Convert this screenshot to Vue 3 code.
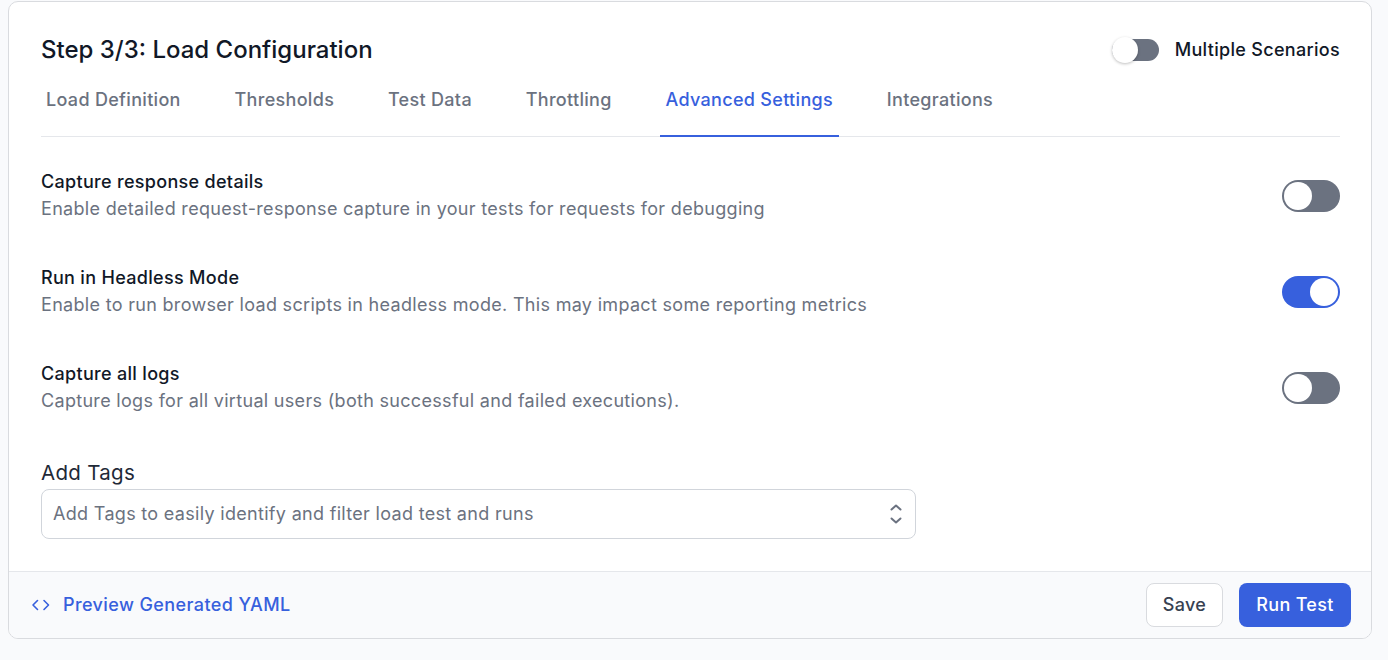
<template>
  <div class="page">
    <div class="card">
      <div class="body">
        <div class="head">
          <h1>Step 3/3: Load Configuration</h1>
          <div class="scenarios">
            <span class="mini-toggle"><span class="mini-knob"></span></span>
            <span class="scenarios-label">Multiple Scenarios</span>
          </div>
        </div>

        <div class="tabs">
          <div
            v-for="tab in tabs"
            :key="tab"
            class="tab"
            :class="{ active: tab === 'Advanced Settings' }"
          >
            {{ tab }}
          </div>
        </div>

        <div class="settings">
          <div v-for="item in settings" :key="item.title" class="setting">
            <div>
              <div class="setting-title">{{ item.title }}</div>
              <div class="setting-desc">{{ item.desc }}</div>
            </div>
            <span class="toggle" :class="{ on: item.on }"><span class="knob"></span></span>
          </div>
        </div>

        <div class="tags">
          <div class="tags-label">Add Tags</div>
          <div class="select">
            <span class="placeholder">Add Tags to easily identify and filter load test and runs</span>
            <svg width="16" height="26" viewBox="0 0 16 26" fill="none" stroke="#6b7280" stroke-width="2" stroke-linecap="round" stroke-linejoin="round">
              <path d="M3.500 8.500 8 4.500l4.500 4" />
              <path d="M3.500 17.500 8 21.500l4.500-4" />
            </svg>
          </div>
        </div>
      </div>

      <div class="footer">
        <a class="preview">
          <svg width="20" height="14" viewBox="0 0 20 14" fill="none" stroke="#3760dd" stroke-width="1.6" stroke-linecap="round" stroke-linejoin="round">
            <path d="M6.500 2.500 2 7l4.500 4.500" />
            <path d="M13 2.500 17.500 7 13 11.500" />
          </svg>
          <span class="preview-label">Preview Generated YAML</span>
        </a>
        <div class="actions">
          <button class="btn-save">Save</button>
          <button class="btn-run">Run Test</button>
        </div>
      </div>
    </div>
  </div>
</template>

<script setup>
const tabs = [
  "Load Definition",
  "Thresholds",
  "Test Data",
  "Throttling",
  "Advanced Settings",
  "Integrations",
];

const settings = [
  {
    title: "Capture response details",
    desc: "Enable detailed request-response capture in your tests for requests for debugging",
    on: false,
  },
  {
    title: "Run in Headless Mode",
    desc: "Enable to run browser load scripts in headless mode. This may impact some reporting metrics",
    on: true,
  },
  {
    title: "Capture all logs",
    desc: "Capture logs for all virtual users (both successful and failed executions).",
    on: false,
  },
];
</script>

<style>
html,
body {
  margin: 0;
  background: #f9fafc;
}
</style>

<style scoped>
.page {
  width: 1388px;
  height: 660px;
  padding: 1px 16px 21px 8px;
  box-sizing: border-box;
  background: #f9fafc;
  font-family: Inter, "Liberation Sans", sans-serif;
  letter-spacing: 0.31px;
  overflow: hidden;
}

.card {
  height: 638px;
  box-sizing: border-box;
  background: #fff;
  border: 1px solid #d9dbdf;
  border-radius: 10px;
  display: flex;
  flex-direction: column;
  overflow: hidden;
}

.body {
  flex: 1;
  padding: 0 31px 0 32px;
}

.head {
  height: 97px;
  display: flex;
  justify-content: space-between;
  align-items: flex-start;
  padding-top: 30px;
  box-sizing: border-box;
  margin-bottom: -20px;
}

h1 {
  margin: 0;
  font-size: 24px;
  line-height: 36px;
  font-weight: 500;
  letter-spacing: 0;
  color: #111827;
}

.scenarios {
  display: flex;
  align-items: center;
  gap: 16px;
  height: 36px;
  font-size: 18px;
  font-weight: 500;
  color: #111827;
}

.scenarios-label,
.placeholder,
.preview-label {
  margin-top: -2px;
}

.mini-toggle {
  position: relative;
  width: 47px;
  height: 22px;
  border-radius: 11px;
  background: #6b7280;
  display: block;
}

.mini-knob {
  position: absolute;
  left: 0;
  top: -2px;
  width: 26px;
  height: 26px;
  border-radius: 50%;
  background: #fff;
  box-shadow: 0 1px 3px rgba(0, 0, 0, 0.25);
}

.tabs {
  display: flex;
  gap: 41.800px;
  height: 58px;
  box-sizing: border-box;
  border-bottom: 1px solid #e5e7eb;
}

.tab {
  padding: 7px 6px 0;
  height: 58px;
  box-sizing: border-box;
  font-size: 18px;
  line-height: 28px;
  font-weight: 500;
  color: #6b7280;
}

.tab:first-child {
  margin-left: -1px;
}

.tab.active {
  color: #3760dd;
  border-bottom: 2px solid #3760dd;
}

.settings {
  padding-top: 26px;
  display: flex;
  flex-direction: column;
  gap: 32px;
}

.setting {
  display: flex;
  justify-content: space-between;
  align-items: center;
  height: 64px;
}

.setting-title {
  font-size: 18px;
  line-height: 28px;
  font-weight: 500;
  color: #111827;
}

.setting-desc {
  font-size: 18px;
  line-height: 26px;
  color: #6b7280;
}

.toggle {
  position: relative;
  display: block;
  width: 58px;
  height: 32px;
  margin-top: 2px;
  border-radius: 16px;
  background: #6b7280;
}

.knob {
  position: absolute;
  top: 2px;
  left: 2px;
  width: 28px;
  height: 28px;
  border-radius: 50%;
  background: #fff;
}

.toggle.on {
  background: #3760dd;
}

.toggle.on .knob {
  left: 28px;
}

.tags {
  padding-top: 40px;
}

.tags-label {
  font-size: 20.500px;
  line-height: 28px;
  color: #1f2937;
  margin-bottom: 2px;
}

.select {
  width: 875px;
  height: 50px;
  box-sizing: border-box;
  border: 1px solid #d1d5db;
  border-radius: 8px;
  padding: 0 11px;
  display: flex;
  align-items: center;
  justify-content: space-between;
  font-size: 18px;
  color: #6b7280;
}

.footer {
  height: 67px;
  box-sizing: border-box;
  border-top: 1px solid #e5e7eb;
  background: #f9fafc;
  display: flex;
  align-items: center;
  justify-content: space-between;
  padding: 0 20px 0 22px;
}

.preview {
  display: flex;
  align-items: center;
  gap: 12px;
  font-size: 18px;
  font-weight: 500;
  letter-spacing: 0.4px;
  color: #3760dd;
}

.actions {
  display: flex;
  gap: 16px;
}

button {
  height: 44px;
  padding: 0 0 2px;
  border-radius: 8px;
  font-family: inherit;
  font-size: 18px;
  font-weight: 500;
  letter-spacing: inherit;
  cursor: pointer;
}

.btn-save {
  width: 77px;
  background: #fff;
  border: 1px solid #d9dbdf;
  color: #374151;
}

.btn-run {
  width: 112px;
  background: #3760dd;
  border: none;
  color: #fff;
}
</style>
